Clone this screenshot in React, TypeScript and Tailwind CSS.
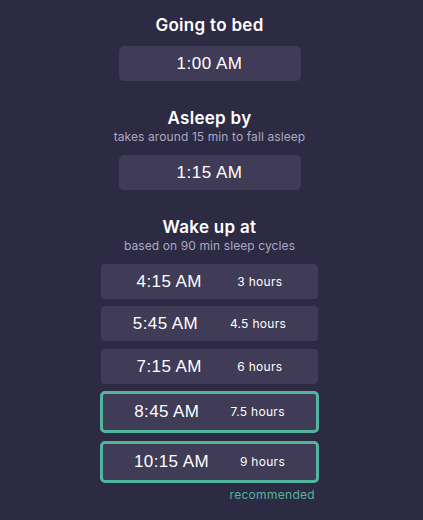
import React from "react";

const rows = [
  { time: "4:15 AM", hours: "3 hours", rec: false, mt: "mt-[10px]" },
  { time: "5:45 AM", hours: "4.5 hours", rec: false, mt: "mt-[7px]" },
  { time: "7:15 AM", hours: "6 hours", rec: false, mt: "mt-[8px]" },
  { time: "8:45 AM", hours: "7.5 hours", rec: true, mt: "mt-[7px]" },
  { time: "10:15 AM", hours: "9 hours", rec: true, mt: "mt-[8px]" },
];

export default function App() {
  return (
    <div
      className="w-full h-[520px] bg-[#2d2a44] text-white flex flex-col items-center pt-[13px] pr-[4px]"
      style={{ fontFamily: "Inter, 'Noto Sans', sans-serif" }}
    >
      <h2 className="text-[17px] leading-[24px] font-semibold tracking-[0.3px]">Going to bed</h2>
      <div className="mt-[9px] w-[182px] h-[35px] rounded-[5px] bg-[#403b56] flex items-center justify-center text-[17px] tracking-[0.5px] font-['Liberation_Sans',sans-serif]">
        1:00 AM
      </div>

      <h2 className="mt-[25px] text-[17px] leading-[24px] font-semibold tracking-[0.3px]">Asleep by</h2>
      <p className="mt-[-1px] text-[12px] leading-[16px] text-[#aca8c0] tracking-[0.1px]">
        takes around 15 min to fall asleep
      </p>
      <div className="mt-[10px] w-[182px] h-[35px] rounded-[5px] bg-[#403b56] flex items-center justify-center text-[17px] tracking-[0.5px] font-['Liberation_Sans',sans-serif]">
        1:15 AM
      </div>

      <h2 className="mt-[25px] text-[17px] leading-[24px] font-semibold tracking-[0.3px]">Wake up at</h2>
      <p className="mt-[-1px] text-[12px] leading-[16px] text-[#aca8c0] tracking-[0.1px]">
        based on 90 min sleep cycles
      </p>

      {rows.map((r) => (
        <div
          key={r.time}
          className={
            r.rec
              ? `${r.mt} w-[219px] h-[42px] rounded-[5px] border-[3px] border-[#52b59d] bg-[#403b56] flex items-center justify-evenly`
              : `${r.mt} w-[217px] h-[35px] rounded-[4px] bg-[#403b56] flex items-center justify-evenly`
          }
        >
          <span className="text-[17px] tracking-[0.4px] font-['Liberation_Sans',sans-serif]">{r.time}</span>
          <span className="text-[12px] font-normal tracking-[0.3px]">{r.hours}</span>
        </div>
      ))}
      <div className="w-[219px] flex justify-end mt-[4px] pr-[4px]">
        <span className="text-[12px] leading-[16px] text-[#52b59d] tracking-[0.3px]">recommended</span>
      </div>
    </div>
  );
}
